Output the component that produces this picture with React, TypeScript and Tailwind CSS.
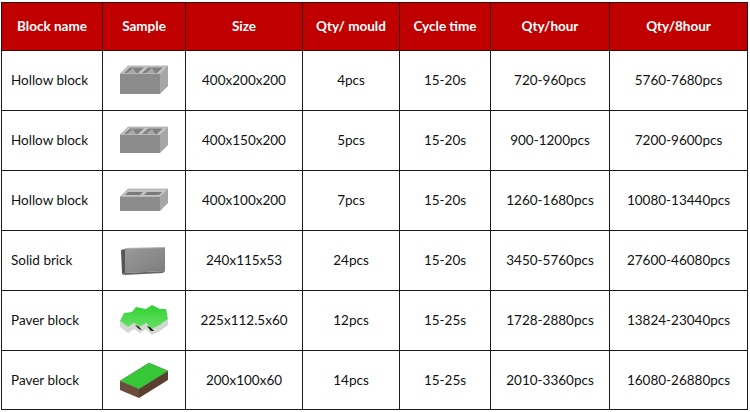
import React from "react";

const font = { fontFamily: "Lato, 'Open Sans', 'Liberation Sans', sans-serif" };

function Hollow({ h = 20, slot = false }: { h?: number; slot?: boolean }) {
  const top = 9;
  const H = top + h;
  return (
    <svg width="50" height={H + 2} viewBox={`0 0 50 ${H + 2}`}>
      {/* top face */}
      <polygon points={`1,${top} 9,1 49,1 41,${top}`} fill="#c4c4c4" stroke="#9a9a9a" strokeWidth="0.6" />
      {/* front */}
      <polygon points={`1,${top} 41,${top} 41,${H} 1,${H}`} fill="#8c8c8c" />
      {/* right side */}
      <polygon points={`41,${top} 49,1 49,${H - 8} 41,${H}`} fill="#a6a6a6" />
      {slot ? (
        <>
          <polygon points={`6,${top - 2} 9,4 24,4 21,${top - 2}`} fill="#7a7a7a" />
          <polygon points={`25,${top - 2} 28,4 43,4 40,${top - 2}`} fill="#7a7a7a" />
        </>
      ) : (
        <>
          <polygon points={`5,${top - 1} 11,2.5 25,2.5 19,${top - 1}`} fill="#808080" />
          <polygon points={`8,${top - 1} 14,3 17,${top - 1}`} fill="#a8a8a8" />
          <polygon points={`23,${top - 1} 29,2.5 44,2.5 38,${top - 1}`} fill="#808080" />
          <polygon points={`27,${top - 1} 33,3 36,${top - 1}`} fill="#a8a8a8" />
        </>
      )}
    </svg>
  );
}

function Solid() {
  return (
    <svg width="46" height="30" viewBox="0 0 46 30">
      <defs>
        <linearGradient id="sg" x1="0" y1="0" x2="1" y2="1">
          <stop offset="0" stopColor="#9a9a9a" />
          <stop offset="1" stopColor="#7c7c7c" />
        </linearGradient>
      </defs>
      <polygon points="4,2 44,1 44,3 4,4" fill="#b0b0b0" />
      <polygon points="4,3 44,2 44,25 4,27" fill="url(#sg)" />
      <polygon points="0,4 4,3 4,27 1,28" fill="#555" />
      <polygon points="1,28 4,27 44,25 42,27 3,29" fill="#666" />
    </svg>
  );
}

function Zigzag() {
  return (
    <svg width="52" height="36" viewBox="0 0 52 36">
      <defs>
        <linearGradient id="zg" x1="0" y1="0" x2="0" y2="1">
          <stop offset="0" stopColor="#2fd12f" />
          <stop offset="1" stopColor="#6be06b" />
        </linearGradient>
      </defs>
      {/* thickness */}
      <polygon points="2,18 2,24 10,30 16,26 22,30 28,26 34,32 42,28 50,22 50,16 42,22 34,26 28,20 22,24 16,20 10,24" fill="#d6d6d6" />
      {/* top */}
      <polygon points="2,18 6,10 14,9 18,4 28,6 34,2 42,6 48,6 50,16 42,22 34,26 28,20 22,24 16,20 10,24" fill="url(#zg)" />
      <polygon points="17,22 21,26 24,27 20,23" fill="#111" />
      <polygon points="29,23 33,28 36,28 32,24" fill="#111" />
    </svg>
  );
}

function RectPaver() {
  return (
    <svg width="50" height="38" viewBox="0 0 50 38">
      <polygon points="1,20 30,2 49,10 20,28" fill="#37c837" stroke="#2a8a2a" strokeWidth="0.6" />
      <polygon points="1,20 20,28 20,37 1,29" fill="#6b4b3b" />
      <polygon points="20,28 49,10 49,19 20,37" fill="#5a3e30" />
    </svg>
  );
}

const rows: [string, React.ReactNode, string, string, string, string, string][] = [
  ["Hollow block", <Hollow h={20} />, "400x200x200", "4pcs", "15-20s", "720-960pcs", "5760-7680pcs"],
  ["Hollow block", <Hollow h={18} />, "400x150x200", "5pcs", "15-20s", "900-1200pcs", "7200-9600pcs"],
  ["Hollow block", <Hollow h={14} slot />, "400x100x200", "7pcs", "15-20s", "1260-1680pcs", "10080-13440pcs"],
  ["Solid brick", <Solid />, "240x115x53", "24pcs", "15-20s", "3450-5760pcs", "27600-46080pcs"],
  ["Paver block", <Zigzag />, "225x112.5x60", "12pcs", "15-25s", "1728-2880pcs", "13824-23040pcs"],
  ["Paver block", <RectPaver />, "200x100x60", "14pcs", "15-25s", "2010-3360pcs", "16080-26880pcs"],
];

const widths = [101, 83, 117, 97, 91, 119, 138];
const heads = ["Block name", "Sample", "Size", "Qty/ mould", "Cycle time", "Qty/hour", "Qty/8hour"];

export default function App() {
  return (
    <div className="w-[750px] h-[412px] bg-white pl-[1px] pt-[2px]" style={font}>
      <table className="border-collapse table-fixed w-[746px] text-[13.5px] text-[#111]">
        <colgroup>
          {widths.map((w, i) => (
            <col key={i} style={{ width: w }} />
          ))}
        </colgroup>
        <thead>
          <tr className="h-[48px] bg-[#c00000]">
            {heads.map((h, i) => (
              <th
                key={i}
                className={`border-[1.5px] border-[#3a0a0a] text-white font-bold text-[13.5px] text-center p-0`}
              >
                {h}
              </th>
            ))}
          </tr>
        </thead>
        <tbody>
          {rows.map((r, ri) => (
            <tr key={ri} className={ri === 5 ? "h-[59px]" : "h-[60px]"}>
              {r.map((c, ci) => (
                <td
                  key={ci}
                  className={`border-[1.5px] border-[#1a1a1a] p-0 ${ci === 0 ? "text-left pl-[9px]" : "text-center"}`}
                >
                  {ci === 1 ? <div className="flex justify-center items-center">{c}</div> : c}
                </td>
              ))}
            </tr>
          ))}
        </tbody>
      </table>
    </div>
  );
}
